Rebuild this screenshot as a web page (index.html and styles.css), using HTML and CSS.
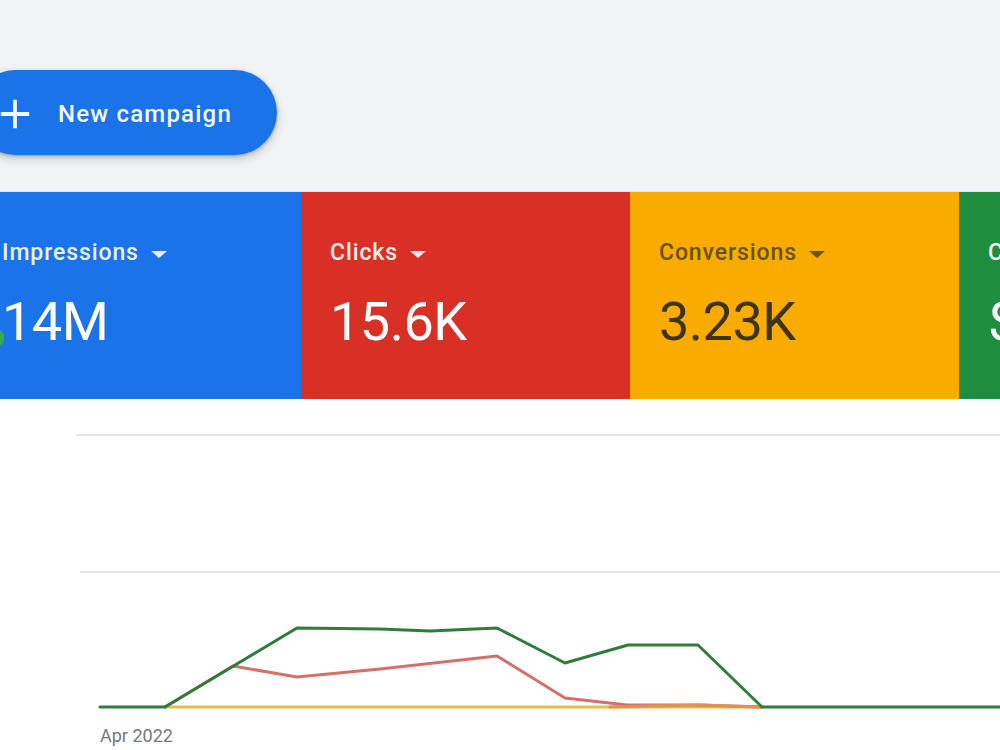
FILE: index.html
```html
<!doctype html>
<html lang="en">
  <head>
    <meta charset="utf-8" />
    <title>Campaigns overview</title>
    <link rel="stylesheet" href="styles.css">
  </head>
  <body>
    <div class="page">
      <header class="toolbar">
        <button type="button" class="fab">
          <svg class="fab-icon" viewBox="0 0 24 24" width="38" height="38" aria-hidden="true">
            <path d="M12 3v18M3 12h18" stroke="currentColor" stroke-width="2.4" fill="none" />
          </svg>
          New campaign
        </button>
      </header>

      <section class="scorecards">
        <div class="card card-blue">
          <span class="mark"></span>
          <div class="card-label">Impressions <span class="caret"></span></div>
          <div class="card-value">14M</div>
        </div>
        <div class="card card-red">
          <div class="card-label">Clicks <span class="caret"></span></div>
          <div class="card-value">15.6K</div>
        </div>
        <div class="card card-yellow">
          <div class="card-label">Conversions <span class="caret"></span></div>
          <div class="card-value">3.23K</div>
        </div>
        <div class="card card-green">
          <div class="card-label">Cost <span class="caret"></span></div>
          <div class="card-value">$9.41K</div>
        </div>
      </section>
    </div>

    <svg class="chart" viewBox="0 398 1000 352" width="1000" height="352">
      <!-- grid -->
      <line class="grid" x1="76" y1="434" x2="1000" y2="434" />
      <line class="grid" x1="80" y1="571" x2="1000" y2="571" />

      <!-- series -->
      <polyline class="series yellow" points="165,706 762,706" />
      <polyline class="series red" points="165,706 233,665 297,676 380,668 497,655 565,697 627,704 700,704 762,706" />
      <polyline class="series orange" points="610,706 650,705 700,704 762,706" />
      <polyline class="series green" points="100,706 165,706 297,627 380,628 430,630 497,627 565,662 628,644 698,644 762,706 1000,706" />

      <text class="axis-label" x="100" y="741">Apr 2022</text>
    </svg>
  </body>
</html>
```

FILE: styles.css
```css
html {
  background: #fff;
}

body {
  margin: 0;
  overflow: hidden;
  font-family: Roboto, "Noto Sans", sans-serif;
}

.page {
  margin-left: -27px;
  width: 1100px;
}

.toolbar {
  background: #f1f3f4;
  height: 191px;
  padding-top: 70px;
  box-sizing: border-box;
}

.fab {
  display: flex;
  align-items: center;
  gap: 24px;
  height: 85px;
  width: 304px;
  padding: 2px 0 0 23px;
  border: 0;
  border-radius: 43px;
  background: #1a73e8;
  color: #f4f8ff;
  font: 500 24px/1 Roboto, sans-serif;
  letter-spacing: 1.2px;
  box-shadow: 0 4px 8px rgba(60, 64, 67, .25), 0 1px 3px rgba(60, 64, 67, .3);
}

.fab-icon {
  flex: none;
}

.scorecards {
  display: flex;
  height: 207px;
  border-top: 1px solid #dfe9f7;
}

.card {
  position: relative;
  flex: none;
  width: 329px;
  box-sizing: border-box;
  padding: 49px 0 0 29px;
  color: #fff;
}

.card-blue { background: #1a73e8; width: 328px; }
.card-red { background: #d93025; }
.card-yellow { background: #f9ab00; color: #3d3416; }
.card-green { background: #1e8e3e; }

.card-label {
  display: flex;
  align-items: center;
  gap: 12px;
  font-size: 23px;
  font-weight: 500;
  line-height: 24px;
  letter-spacing: 0.9px;
  opacity: .9;
}

.card-yellow .card-label {
  color: #6b5200;
  opacity: 1;
}

.caret {
  width: 0;
  height: 0;
  border-left: 8px solid transparent;
  border-right: 8px solid transparent;
  border-top: 7px solid currentColor;
  margin-top: 2px;
}

.card-value {
  margin-top: 25px;
  font-size: 54px;
  line-height: 64px;
  letter-spacing: -0.5px;
}

/* selection dot peeking in from the left edge */
.mark {
  position: absolute;
  left: 19px;
  top: 138px;
  width: 12px;
  height: 16px;
  border-radius: 6px;
  background: #34a853;
}

.chart {
  display: block;
}

.grid {
  stroke: #e6e6e6;
  stroke-width: 2;
}

.series {
  fill: none;
  stroke-width: 3;
  stroke-linejoin: round;
  stroke-linecap: round;
}

.green { stroke: #2f7d3c; }
.red { stroke: #d4706a; }
.yellow { stroke: #e4bd4c; }
.orange { stroke: #e0934a; stroke-width: 3; }

.axis-label {
  font: 18px Roboto, sans-serif;
  fill: #75787c;
}
```
